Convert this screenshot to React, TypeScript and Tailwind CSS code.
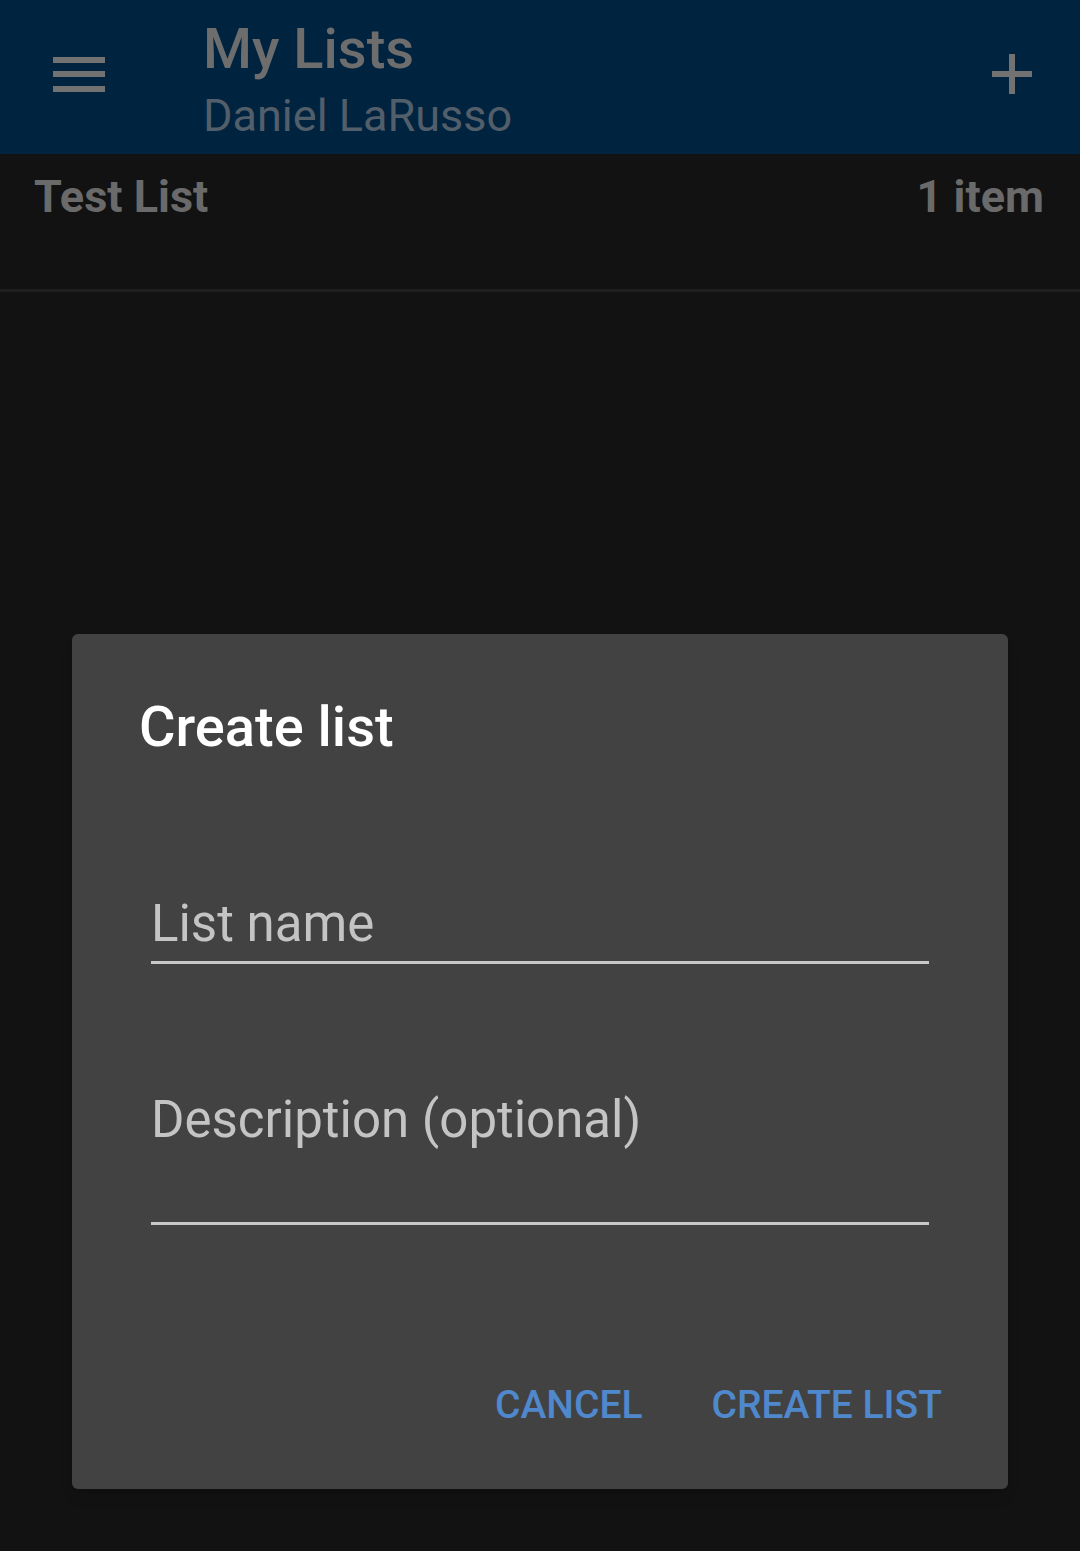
import { useState } from "react";

const font = { fontFamily: "Roboto, 'Noto Sans', Arial, sans-serif" };

function MenuIcon() {
  return (
    <svg width="52" height="35" viewBox="0 0 52 35" className="block">
      <rect x="0" y="0" width="52" height="6" fill="#727272" />
      <rect x="0" y="14" width="52" height="6" fill="#727272" />
      <rect x="0" y="29" width="52" height="6" fill="#727272" />
    </svg>
  );
}

function PlusIcon() {
  return (
    <svg width="40" height="40" viewBox="0 0 40 40" className="block">
      <rect x="17" y="0" width="6" height="40" fill="#727272" />
      <rect x="0" y="17" width="40" height="6" fill="#727272" />
    </svg>
  );
}

function Field({ label, tall }: { label: string; tall?: boolean }) {
  return (
    <div className="mx-[79px]">
      <div
        className={
          "text-[51px] leading-[60px] text-[#c4c4c4] " +
          (tall ? "pb-[72px]" : "pb-[7px]")
        }
      >
        {label}
      </div>
      <div className="h-[3px] bg-[#c8c8c8]" />
    </div>
  );
}

export default function App() {
  const [open] = useState(true);

  return (
    <div className="relative min-h-[1551px] bg-[#121212]" style={font}>
      {/* App bar */}
      <header className="flex h-[154px] items-start bg-[#00233f]">
        <div className="pl-[53px] pt-[57px]">
          <MenuIcon />
        </div>
        <div className="ml-[98px] pt-[21px]">
          <div className="text-[56px] font-medium leading-[56px] text-[#6d6d6d]">My Lists</div>
          <div className="mt-[16px] text-[45px] leading-[45px] text-[#525e69]">Daniel LaRusso</div>
        </div>
        <div className="ml-auto pr-[48px] pt-[54px]">
          <PlusIcon />
        </div>
      </header>

      {/* List rows */}
      <div className="flex h-[135px] items-start justify-between pl-[34px] pr-[36px] pt-[20px]">
        <div className="text-[45px] font-bold leading-[45px] text-[#6a6a6a]">Test List</div>
        <div className="text-[45px] font-bold leading-[45px] text-[#6a6a6a]">1 item</div>
      </div>
      <div className="h-[3px] bg-[#1f1f1f]" />

      {/* Create list dialog */}
      {open && (
        <div className="absolute left-[72px] top-[634px] w-[936px] rounded-[6px] bg-[#424242] shadow-lg">
          <div className="pl-[67px] pt-[65px] text-[56px] font-medium leading-[56px] text-white">
            Create list
          </div>
          <div className="pt-[139px]">
            <Field label="List name" />
          </div>
          <div className="pt-[126px]">
            <Field label="Description (optional)" tall />
          </div>
          <div className="flex justify-end gap-[69px] pr-[66px] pt-[161px] pb-[64px]">
            <button className="text-[39px] font-medium leading-[39px] text-[#5088cd]">CANCEL</button>
            <button className="text-[39px] font-medium leading-[39px] text-[#5088cd]">CREATE LIST</button>
          </div>
        </div>
      )}
    </div>
  );
}
